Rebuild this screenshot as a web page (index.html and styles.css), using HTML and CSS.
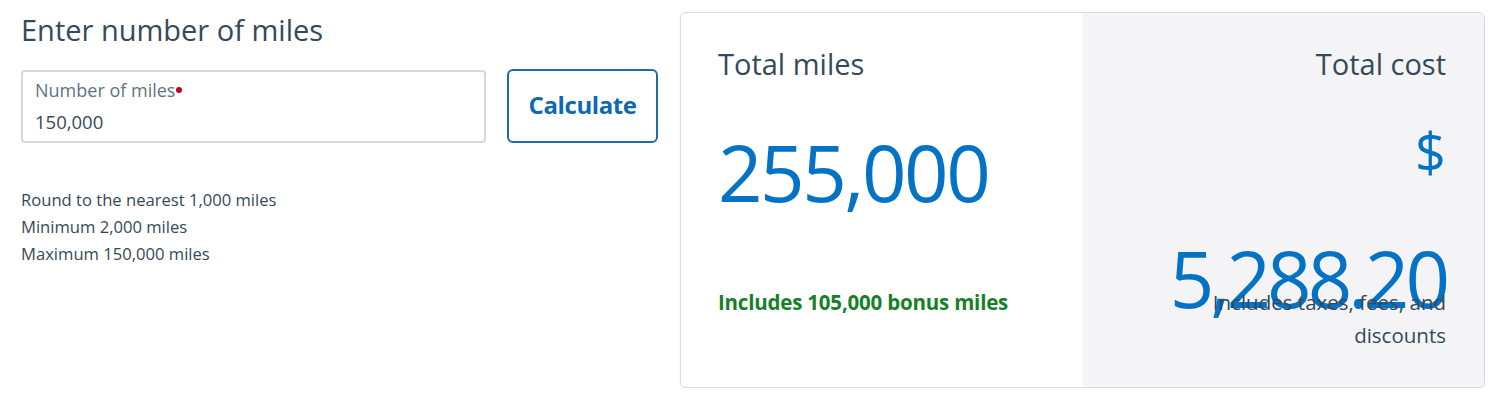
FILE: index.html
```html
<!DOCTYPE html>
<html lang="en">
<head>
<meta charset="utf-8">
<title>Buy miles</title>
<link rel="stylesheet" href="styles.css">
</head>
<body>
<main class="page">
  <section class="entry">
    <h2 class="entry-title">Enter number of miles</h2>
    <div class="entry-row">
      <label class="field">
        <span class="field-label">Number of miles<span class="required-dot"></span></span>
        <span class="field-value">150,000</span>
      </label>
      <button class="calc-btn" type="button">Calculate</button>
    </div>
    <ul class="rules">
      <li>Round to the nearest 1,000 miles</li>
      <li>Minimum 2,000 miles</li>
      <li>Maximum 150,000 miles</li>
    </ul>
  </section>
  <section class="summary">
    <div class="summary-col miles-col">
      <h3 class="summary-title">Total miles</h3>
      <div class="big-value">
        <div class="big-number">255,000</div>
      </div>
      <p class="bonus">Includes 105,000 bonus miles</p>
    </div>
    <div class="summary-col cost-col">
      <h3 class="summary-title">Total cost</h3>
      <div class="big-value cost-value">
        <div class="currency">$</div>
        <div class="big-number cost-number">5,288.20</div>
      </div>
      <p class="cost-note">Includes taxes, fees, and discounts</p>
    </div>
  </section>
</main>
</body>
</html>
```
FILE: styles.css
```css
* { box-sizing: border-box; }
html, body { margin: 0; padding: 0; background: #ffffff; }
body {
  font-family: "Open Sans", "Noto Sans", Arial, sans-serif;
  color: #36495a;
}
.page {
  display: flex;
  align-items: flex-start;
  gap: 22px;
  padding: 12px 0 0 21px;
}
.entry {
  width: 637px;
  padding-top: 1px;
}
.entry-title {
  margin: 0;
  font-size: 29px;
  line-height: 34px;
  font-weight: 400;
  color: #36495a;
}
.entry-row {
  display: flex;
  gap: 21px;
  margin-top: 23px;
}
.field {
  width: 466px;
  height: 73px;
  border: 2px solid #d5d9dd;
  border-radius: 4px;
  padding: 6px 12px 0 12px;
  display: flex;
  flex-direction: column;
}
.field-label {
  font-size: 18px;
  line-height: 25px;
  color: #5f7480;
  display: flex;
  align-items: center;
}
.required-dot {
  width: 6px;
  height: 6px;
  border-radius: 50%;
  background: #c30019;
  margin-left: 1px;
  margin-top: -1px;
}
.field-value {
  font-size: 18.5px;
  line-height: 25px;
  margin-top: 6px;
  color: #36495a;
}
.calc-btn {
  width: 151px;
  height: 74px;
  border: 2px solid #1f6aaa;
  border-radius: 6px;
  background: #fff;
  color: #0f68b0;
  font-family: inherit;
  font-size: 24px;
  font-weight: 700;
  letter-spacing: -0.4px;
  margin-top: -1px;
  padding: 0 0 4px 0;
}
.rules {
  list-style: none;
  margin: 43px 0 0 0;
  padding: 0;
  font-size: 16.6px;
  line-height: 27px;
  color: #36495a;
}
.summary {
  width: 805px;
  display: grid;
  grid-template-columns: 402px 1fr;
  border: 1px solid #dadada;
  border-radius: 6px;
  overflow: hidden;
  box-shadow: 0 1px 2px rgba(0, 0, 0, 0.08);
}
.summary-col {
  padding: 34px 38px 35px 37px;
}
.cost-col {
  background: #f4f4f6;
  text-align: right;
}
.summary-title {
  margin: 0;
  font-size: 29px;
  line-height: 34px;
  font-weight: 400;
  color: #36495a;
}
.big-value {
  height: 109px;
  margin: 37px 0 59px 0;
  color: #0473c6;
}
.big-number {
  font-size: 78px;
  line-height: 109px;
  letter-spacing: -2.5px;
  white-space: nowrap;
}
.cost-number {
  letter-spacing: -4px;
}
.cost-value {
  display: flex;
  flex-direction: column;
  align-items: flex-end;
}
.currency {
  flex: 0 0 109px;
  font-size: 54px;
  line-height: 73px;
  margin-top: -3px;
}
.bonus {
  margin: 0;
  font-size: 20.5px;
  line-height: 33px;
  font-weight: 700;
  color: #177f27;
  letter-spacing: -0.2px;
}
.cost-note {
  margin: 0 0 0 auto;
  max-width: 260px;
  font-size: 20.5px;
  line-height: 33px;
  color: #36495a;
}
```
